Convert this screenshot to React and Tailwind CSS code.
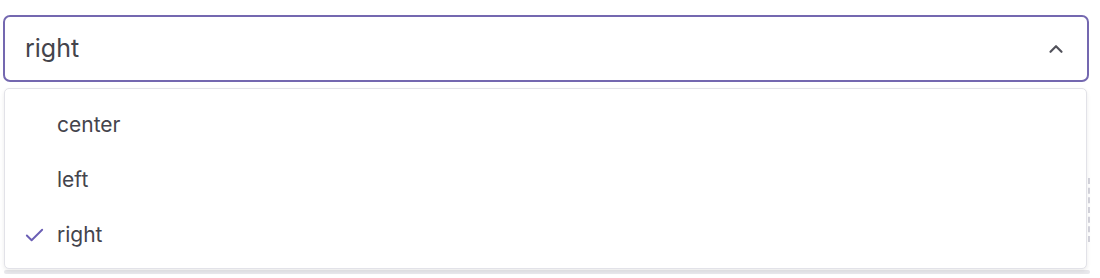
import React from 'react';
import { ChevronUp, Check } from 'lucide-react';

const options = ['center', 'left', 'right'];

const App = () => {
    const selected = 'right';

    return (
        <div className="relative w-[1100px] h-[278px] bg-white overflow-hidden" style={{ fontFamily: 'Inter, "Noto Sans", sans-serif' }}>
            {/* underlying content peeking out */}
            <div className="absolute left-[4px] right-[10px] top-[270px] h-[4px] bg-[#e8e8ec] rounded-sm" />
            <div className="absolute left-[1088px] top-[178px] h-[64px] border-l-2 border-dashed border-[#d4d4dc]" />

            <div className="pt-[15px] pl-[3px] pr-[11px]">
                {/* Trigger */}
                <button className="w-full h-[67px] flex items-center justify-between pl-[20px] pr-[22px] border-2 border-[#7468b0] rounded-[7px] bg-white text-[25px] text-[#44444c]">
                    <span>{selected}</span>
                    <ChevronUp className="w-[22px] h-[22px] text-[#52525b] mr-[-2px]" strokeWidth={2.4} />
                </button>

                {/* Menu */}
                <div className="relative mt-[6px] ml-[1px] mr-[2px] h-[181px] bg-white border border-[#e2e2e8] rounded-[5px] shadow-[0_2px_4px_rgba(0,0,0,0.08)] py-[9px]">
                    {options.map((opt) => (
                        <div key={opt} className="h-[55px] flex items-center text-[21px] text-[#44444c]">
                            <span className="w-[52px] flex justify-end pr-[11px]">
                                {opt === selected && <Check className="w-[23px] h-[23px] text-[#6b5fb5]" strokeWidth={2} />}
                            </span>
                            <span className="mt-[-2px]">{opt}</span>
                        </div>
                    ))}
                </div>
            </div>
        </div>
    );
};

export default App;
